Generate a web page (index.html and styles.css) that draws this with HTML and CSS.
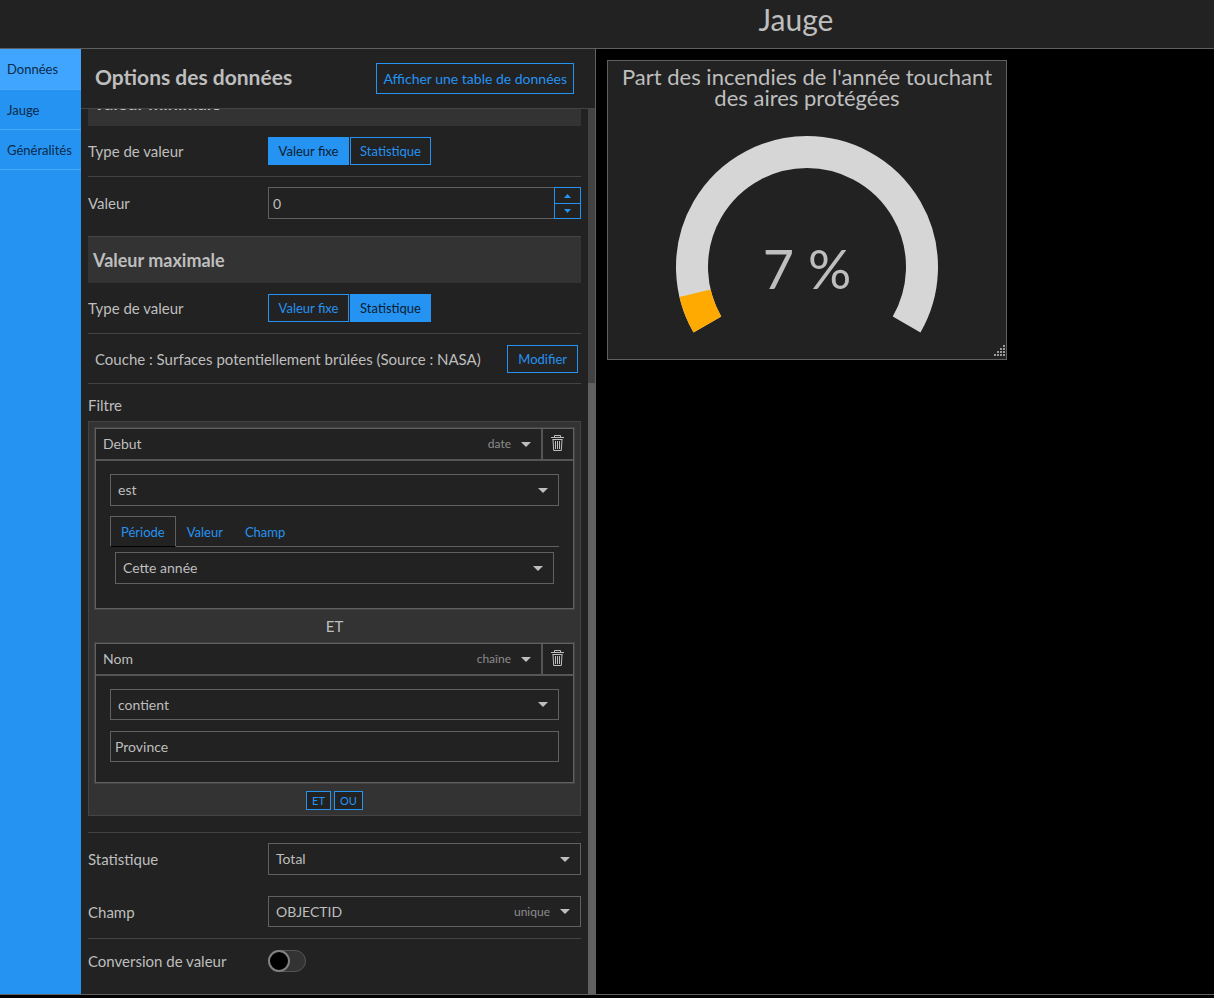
FILE: index.html
```html
<!DOCTYPE html>
<html lang="fr">
<head>
<meta charset="utf-8">
<meta name="viewport" content="width=device-width, initial-scale=1">
<title>Jauge</title>
<link rel="stylesheet" href="styles.css">
</head>
<body>
<header class="topbar"><h1 class="topbar-title">Jauge</h1></header>
<main class="workspace">
  <nav class="side-tabs">
    <button class="side-tab is-active" type="button">Données</button>
    <button class="side-tab" type="button">Jauge</button>
    <button class="side-tab" type="button">Généralités</button>
  </nav>

  <section class="panel">
    <header class="panel-head">
      <h2 class="panel-title">Options des données</h2>
      <button class="btn btn-large" type="button">Afficher une table de données</button>
    </header>
    <div class="panel-body">
      <form class="options">
        <h3 class="section-title">Valeur minimale</h3>
        <div class="row row-ruled">
          <span class="row-label">Type de valeur</span>
          <div class="btn-group">
            <button class="btn btn-choice is-on" type="button">Valeur fixe</button>
            <button class="btn btn-choice" type="button">Statistique</button>
          </div>
        </div>
        <div class="row row-value">
          <label class="row-label" for="min-value">Valeur</label>
          <div class="number">
            <input class="text-input" id="min-value" type="text" inputmode="numeric" value="0">
            <div class="stepper">
              <button class="step" type="button" aria-label="Augmenter"><svg class="step-icon" viewBox="0 0 7 4"><path d="M0 4 3.5 0 7 4z"/></svg></button>
              <button class="step" type="button" aria-label="Diminuer"><svg class="step-icon" viewBox="0 0 7 4"><path d="M0 0 3.5 4 7 0z"/></svg></button>
            </div>
          </div>
        </div>

        <h3 class="section-title">Valeur maximale</h3>
        <div class="row row-ruled">
          <span class="row-label">Type de valeur</span>
          <div class="btn-group">
            <button class="btn btn-choice" type="button">Valeur fixe</button>
            <button class="btn btn-choice is-on" type="button">Statistique</button>
          </div>
        </div>
        <div class="row row-ruled row-layer">
          <span class="layer-name">Couche : Surfaces potentiellement brûlées (Source : NASA)</span>
          <button class="btn btn-edit" type="button">Modifier</button>
        </div>

        <p class="filter-label">Filtre</p>
        <div class="filter">
          <div class="clause">
            <div class="clause-head">
              <div class="dropdown dropdown-bare">
                <select class="select" aria-label="Champ du filtre"><option>Debut</option></select>
                <span class="hint">date</span>
                <svg class="caret" viewBox="0 0 10 5"><path d="M0 0h10L5 5z"/></svg>
              </div>
              <button class="trash" type="button" aria-label="Supprimer">
                <svg class="trash-icon" viewBox="0 0 13 17"><path d="M3.500 2V.5h6V2M0 2.500h13M1.500 4.500h10M2 4.500 2.700 15.500h7.600L11 4.500M4.500 6v8M6.500 6v8M8.500 6v8"/></svg>
              </button>
            </div>
            <div class="clause-body">
              <div class="dropdown">
                <select class="select" aria-label="Opérateur"><option>est</option></select>
                <svg class="caret" viewBox="0 0 10 5"><path d="M0 0h10L5 5z"/></svg>
              </div>
              <div class="mini-tabs">
                <button class="mini-tab is-active" type="button">Période</button>
                <button class="mini-tab" type="button">Valeur</button>
                <button class="mini-tab" type="button">Champ</button>
              </div>
              <div class="mini-panel">
                <div class="dropdown">
                  <select class="select" aria-label="Période"><option>Cette année</option></select>
                  <svg class="caret" viewBox="0 0 10 5"><path d="M0 0h10L5 5z"/></svg>
                </div>
              </div>
            </div>
          </div>
          <p class="joiner">ET</p>
          <div class="clause">
            <div class="clause-head">
              <div class="dropdown dropdown-bare">
                <select class="select" aria-label="Champ du filtre"><option>Nom</option></select>
                <span class="hint">chaîne</span>
                <svg class="caret" viewBox="0 0 10 5"><path d="M0 0h10L5 5z"/></svg>
              </div>
              <button class="trash" type="button" aria-label="Supprimer">
                <svg class="trash-icon" viewBox="0 0 13 17"><path d="M3.500 2V.5h6V2M0 2.500h13M1.500 4.500h10M2 4.500 2.700 15.500h7.600L11 4.500M4.500 6v8M6.500 6v8M8.500 6v8"/></svg>
              </button>
            </div>
            <div class="clause-body">
              <div class="dropdown dropdown-compact">
                <select class="select" aria-label="Opérateur"><option>contient</option></select>
                <svg class="caret" viewBox="0 0 10 5"><path d="M0 0h10L5 5z"/></svg>
              </div>
              <input class="text-input clause-text" type="text" aria-label="Texte" value="Province">
            </div>
          </div>
          <div class="add-clause">
            <button class="btn btn-small" type="button">ET</button>
            <button class="btn btn-small" type="button">OU</button>
          </div>
        </div>

        <div class="row row-top">
          <label class="row-label" for="stat">Statistique</label>
          <div class="dropdown">
            <select class="select" id="stat"><option>Total</option></select>
            <svg class="caret" viewBox="0 0 10 5"><path d="M0 0h10L5 5z"/></svg>
          </div>
        </div>
        <div class="row row-ruled">
          <label class="row-label" for="field">Champ</label>
          <div class="dropdown dropdown-compact">
            <select class="select" id="field"><option>OBJECTID</option></select>
            <span class="hint">unique</span>
            <svg class="caret" viewBox="0 0 10 5"><path d="M0 0h10L5 5z"/></svg>
          </div>
        </div>
        <div class="row row-toggle">
          <label class="row-label" for="convert">Conversion de valeur</label>
          <input class="toggle" id="convert" type="checkbox" role="switch">
        </div>
      </form>
      <div class="scrollbar"><div class="scroll-thumb"></div></div>
    </div>
  </section>

  <section class="preview">
    <article class="widget">
      <h2 class="widget-title">Part des incendies de l'année touchant des aires protégées</h2>
      <svg class="gauge" viewBox="0 0 264 200" role="img" aria-label="7 %">
        <path class="gauge-track" d="M32.400 189.500A115 115 0 1 1 231.600 189.500"/>
        <path class="gauge-value" d="M32.400 189.500A115 115 0 0 1 20.040 158.260"/>
        <text class="gauge-text" x="132" y="154">7 %</text>
      </svg>
      <svg class="grip" viewBox="0 0 11 11"><path d="M9 0h2v2H9zM6 3h2v2H6zM9 3h2v2H9zM3 6h2v2H3zM6 6h2v2H6zM9 6h2v2H9zM0 9h2v2H0zM3 9h2v2H3zM6 9h2v2H6zM9 9h2v2H9z"/></svg>
    </article>
  </section>
</main>
</body>
</html>
```

FILE: styles.css
```css
:root {
  --bg: #222;
  --raised: #333;
  --rule: #444;
  --line: #606060;
  --text: #bebebe;
  --muted: #8c8c8c;
  --blue: #2593f2;
}

*, *::before { box-sizing: border-box; }

body {
  margin: 0;
  height: 100vh;
  display: flex;
  flex-direction: column;
  padding-bottom: 3px;
  overflow: hidden;
  background: #000;
  color: var(--text);
  font: 15px/20px Lato, "Open Sans", sans-serif;
}

h1, h2, h3, p { margin: 0; font-weight: 400; }
button, input, select { font: inherit; color: inherit; margin: 0; border-radius: 0; }
button { cursor: pointer; }

.topbar {
  flex: none;
  padding: 1px 0 11px 378px;
  background: var(--bg);
  border-bottom: 1px solid var(--line);
  text-align: center;
}
.topbar-title { font-size: 30px; line-height: 36px; }

.workspace {
  flex: 1;
  min-height: 0;
  display: grid;
  grid-template-columns: 81px 515px 1fr;
  border-bottom: 1px solid var(--line);
}

.side-tabs { display: flex; flex-direction: column; background: var(--blue); }
.side-tab {
  height: 40px;
  padding: 0 7px;
  border: 0;
  border-bottom: 1px solid #4aa9ff;
  background: none;
  color: #0a2a48;
  font-size: 13px;
  text-align: left;
}
.side-tab.is-active { height: 41px; background: #3fa5ff; }

.panel {
  display: flex;
  flex-direction: column;
  min-height: 0;
  background: var(--bg);
  border-right: 1px solid var(--line);
}
.panel-head {
  display: flex;
  align-items: center;
  justify-content: space-between;
  padding: 14px 21px 14px 14px;
  border-bottom: 1px solid var(--rule);
}
.panel-title { padding-bottom: 4px; font-size: 21px; font-weight: 700; line-height: 27px; }
.panel-body { flex: 1; min-height: 0; display: flex; }

.options {
  flex: 1;
  min-width: 0;
  display: flex;
  flex-direction: column;
  justify-content: flex-end;
  overflow: hidden;
  padding: 0 7px 22px;
}
.options > * { flex: none; }

.scrollbar { width: 7px; background: #424242; display: flex; align-items: flex-end; }
.scroll-thumb { width: 100%; height: 69%; background: var(--line); }

.btn {
  height: 28px;
  padding: 0 10px;
  border: 1px solid var(--blue);
  background: var(--bg);
  color: var(--blue);
  font-size: 13px;
  line-height: 20px;
  white-space: nowrap;
}
.btn.is-on { background: var(--blue); color: #0a1c2e; }
.btn-large { height: 31px; padding: 0 6px; font-size: 14px; }
.btn-group { display: grid; grid-template-columns: 1fr 1fr; gap: 1px; width: 163px; }
.btn-choice { padding: 0; }

.section-title {
  padding: 13px 5px;
  background: var(--raised);
  border-top: 1px solid var(--rule);
  font-size: 18px;
  font-weight: 700;
}

.row { display: grid; grid-template-columns: 180px 1fr; align-items: center; padding: 11px 0; }
.row-ruled { border-bottom: 1px solid var(--rule); }
.row-value { padding: 10px 0 17px; }
.row-layer { grid-template-columns: 1fr auto; padding: 11px 3px 10px 7px; }
.row-top { padding: 10px 0; border-top: 1px solid var(--rule); margin-top: 16px; }
.row-toggle { padding: 11px 0 0; }

.number { display: grid; grid-template-columns: 1fr 27px; }
.text-input {
  width: 100%;
  height: 32px;
  padding: 0 4px;
  border: 1px solid var(--line);
  background: var(--bg);
  font-size: 14px;
}
.number .text-input { border-right: 0; }
.stepper { display: grid; grid-template-rows: 1fr 1fr; border: 1px solid var(--blue); }
.step { display: grid; place-items: center; padding: 0; border: 0; background: none; }
.step + .step { border-top: 1px solid var(--blue); }
.step-icon { width: 7px; height: 4px; fill: var(--blue); }

.filter-label { padding: 11px 0 6px; }
.filter { padding: 5px; background: var(--raised); border: 1px solid var(--rule); }
.clause { background: var(--bg); border: 1px solid var(--line); outline: 1px solid var(--rule); margin: 1px; }
.clause-head { display: grid; grid-template-columns: 1fr 32px; border-bottom: 2px solid #555; }
.clause-body { padding: 13px 14px 20px; }
.trash {
  display: grid;
  place-items: center;
  padding: 0 2px 2px 0;
  border: 0;
  border-left: 2px solid #555;
  background: none;
}
.trash-icon { width: 13px; height: 17px; fill: none; stroke: var(--text); }

.dropdown {
  display: grid;
  grid-template-columns: 1fr auto 10px 10px;
  column-gap: 0;
  align-items: center;
  border: 1px solid var(--line);
}
.dropdown-bare { border: 0; }
.select {
  grid-area: 1 / 1 / 2 / -1;
  width: 100%;
  height: 30px;
  padding: 0 7px;
  border: 0;
  background: transparent;
  appearance: none;
  font-size: 14px;
}
.dropdown-compact .select { height: 29px; }
.hint { grid-area: 1 / 2; padding-right: 10px; color: var(--muted); font-size: 12px; pointer-events: none; }
.caret { grid-area: 1 / 3; width: 10px; height: 5px; fill: var(--text); pointer-events: none; }

.mini-tabs { display: flex; margin-top: 10px; border-bottom: 1px solid var(--line); }
.mini-tab {
  height: 30px;
  padding: 0 10px;
  border: 1px solid transparent;
  border-bottom: 0;
  background: none;
  color: var(--blue);
  font-size: 13px;
}
.mini-tab.is-active { height: 31px; margin-bottom: -1px; border-color: var(--line); border-bottom: 1px solid #000; }
.mini-panel { padding: 5px 5px 4px; }
.joiner { padding: 6px 0; text-align: center; }
.clause-text { height: 31px; margin-top: 11px; }
.add-clause { display: flex; justify-content: center; gap: 3px; padding-top: 7px; }
.btn-small { height: 19px; padding: 0 5px; font-size: 11px; line-height: 16px; }

.toggle {
  display: flex;
  align-items: center;
  width: 38px;
  height: 22px;
  border: 1px solid #555;
  border-radius: 11px;
  background: var(--raised);
  appearance: none;
}
.toggle::before {
  content: "";
  width: 22px;
  height: 22px;
  margin-left: -1px;
  border: 2px solid #808080;
  border-radius: 50%;
  background: #000;
}

.preview { padding: 11px; min-width: 0; }
.widget {
  position: relative;
  display: flex;
  flex-direction: column;
  align-items: center;
  width: 400px;
  max-width: 100%;
  height: 300px;
  padding: 5px 10px;
  background: var(--bg);
  border: 1px solid var(--line);
}
.widget-title { font-size: 22px; line-height: 21px; text-align: center; }
.gauge { width: 264px; max-width: 100%; margin-top: 27px; }
.gauge path { fill: none; stroke-width: 32px; }
.gauge .gauge-track { stroke: #d6d6d6; }
.gauge .gauge-value { stroke: #fa0; }
.gauge-text { fill: var(--text); font-size: 54px; text-anchor: middle; }
.grip { position: absolute; right: 1px; bottom: 3px; width: 11px; height: 11px; fill: #999; }
```
